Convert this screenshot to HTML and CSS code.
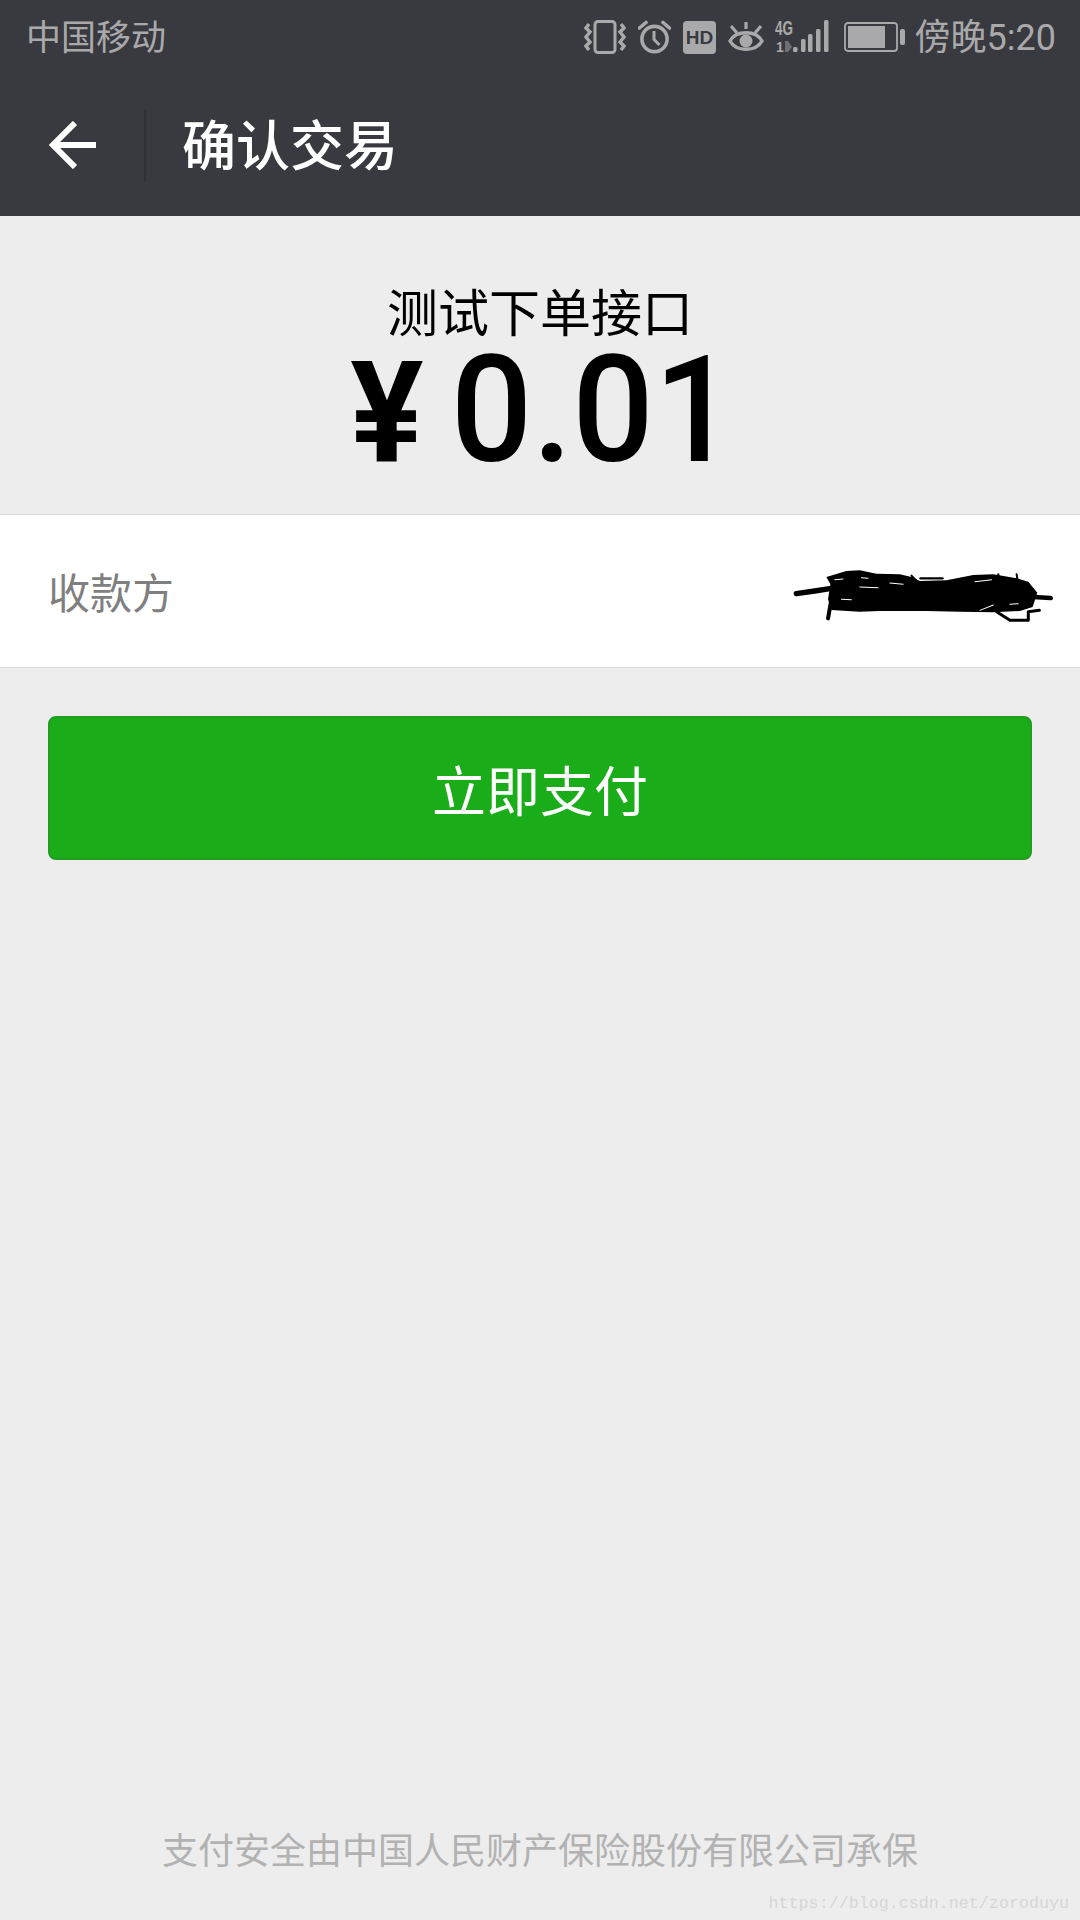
FILE: index.html
```html
<!DOCTYPE html>
<html lang="zh-CN">

<head>
  <meta charset="UTF-8">
  <meta name="viewport" content="width=device-width, initial-scale=1.0">
  <title>确认交易</title>
  <link rel="stylesheet" href="styles.css">
</head>

<body>
  <div class="page">
    <div class="status">
      <span class="carrier">中国移动</span>
      <div class="status-icons">
        <svg class="ico-vibrate" width="42" height="34" viewBox="0 0 42 34" fill="none" stroke="#a9a9ac">
          <rect x="11" y="1.5" width="20" height="31" rx="3" stroke-width="3"/>
          <path d="M5 4 L2 8 L6 12 L2 17 L6 22 L2 26 L5 30" stroke-width="3.4"/>
          <path d="M37 4 L40 8 L36 12 L40 17 L36 22 L40 26 L37 30" stroke-width="3.4"/>
        </svg>
        <svg class="ico-alarm" width="33" height="34" viewBox="0 0 33 34" fill="none" stroke="#a9a9ac">
          <circle cx="16.5" cy="19" r="12.6" stroke-width="3.6"/>
          <path d="M16 11 V19.5 L21.5 25" stroke-width="3"/>
          <path d="M1.5 8 L8 2.5 M31.5 8 L25 2.5" stroke-width="3.6" stroke-linecap="round"/>
        </svg>
        <svg class="ico-hd" width="33" height="33" viewBox="0 0 33 33">
          <rect width="33" height="33" rx="4" fill="#a9a9ac"/>
          <text x="16.5" y="23" text-anchor="middle" class="hd-label">HD</text>
        </svg>
        <svg class="ico-eye" width="36" height="32" viewBox="0 0 36 32" fill="none" stroke="#a9a9ac">
          <path d="M2 20 C8 9 28 9 34 20 C28 31 8 31 2 20 Z" stroke-width="3.4"/>
          <circle cx="18" cy="20" r="6.5" fill="#a9a9ac" stroke="none"/>
          <path d="M3 5 L9 12 M33 5 L27 12 M18 1 V8" stroke-width="3.2"/>
        </svg>
        <svg class="ico-signal" width="54" height="36" viewBox="0 0 54 36">
          <text x="0" y="16" class="net-label" textLength="18" lengthAdjust="spacingAndGlyphs">4G</text>
          <text x="1" y="33" class="net-small">1</text>
          <path d="M10 22 H13 L17 28 L13 33 H10 Z" fill="#6f7074"/>
          <rect x="18" y="28" width="4.5" height="5" rx="1.5" fill="#a9a9ac"/>
          <rect x="26" y="20" width="4.5" height="13" rx="1.5" fill="#a9a9ac"/>
          <rect x="33" y="15" width="4.5" height="18" rx="1.5" fill="#a9a9ac"/>
          <rect x="41" y="10" width="4.5" height="23" rx="1.5" fill="#a9a9ac"/>
          <rect x="49" y="1" width="4.5" height="32" rx="1.5" fill="#a9a9ac"/>
        </svg>
        <svg class="ico-battery" width="62" height="30" viewBox="0 0 62 30">
          <rect x="1" y="1" width="52" height="28" rx="3" fill="none" stroke="#a9a9ac" stroke-width="1.8"/>
          <rect x="4" y="4" width="37" height="22" fill="#a9a9ac"/>
          <rect x="56" y="7" width="5" height="16" rx="2" fill="#a9a9ac"/>
        </svg>
      </div>
      <span class="clock">傍晚5:20</span>
    </div>

    <header class="nav">
      <button class="back" aria-label="返回">
        <svg width="50" height="48" viewBox="0 0 50 48" fill="none" stroke="#fff" stroke-width="6">
          <path d="M48 24 H4"/>
          <path d="M27 2 L5 24 L27 46"/>
        </svg>
      </button>
      <span class="nav-line"></span>
      <h1 class="nav-title">确认交易</h1>
    </header>

    <section class="summary">
      <div class="goods">测试下单接口</div>
      <div class="amount"><span class="yen">¥</span>0.01</div>
    </section>

    <div class="payee">
      <span class="payee-label">收款方</span>
      <svg class="scribble" width="262" height="54" viewBox="100 85 785 160" fill="none" stroke="#000" stroke-linecap="round" stroke-linejoin="round">
        <path fill="#000" stroke="none" d="M200 108 L260 90 L300 88 L350 98 L420 100 L455 108 L480 120 L560 118 L640 102 L700 100 L770 112 L805 122 L832 155 L818 198 L780 210 L700 214 L600 212 L500 210 L360 210 L300 212 L215 207 L205 175 L212 130 Z"/>
        <path stroke-width="16" d="M110 158 L165 150 L215 142"/>
        <path stroke-width="14" d="M820 168 L872 171"/>
        <path stroke-width="12" d="M215 175 L205 232"/>
        <path stroke-width="9" d="M710 212 L750 238 L805 238 L805 212 L838 208"/>
        <path stroke-width="7" d="M482 112 H548"/>
        <path stroke-width="6" d="M455 104 L470 120 M770 100 L775 130 M715 100 L720 120"/>
        <path stroke="#fff" stroke-width="3" d="M225 116 L250 114 M305 110 L325 112 M300 138 L355 140 M390 126 L430 130 M645 122 L695 116 M245 175 L275 176 M660 208 L700 192 M750 190 L775 188"/>
      </svg>
    </div>

    <div class="pay-wrap">
      <button class="pay-btn">立即支付</button>
    </div>

    <footer class="guarantee">支付安全由中国人民财产保险股份有限公司承保</footer>
    <div class="watermark">https://blog.csdn.net/zoroduyu</div>
  </div>
</body>

</html>
```

FILE: styles.css
```css
* {
  box-sizing: border-box;
}

body {
  margin: 0;
  background: #ededed;
  font-family: "Noto Sans CJK SC", "Noto Sans", sans-serif;
}

.page {
  position: relative;
  display: flex;
  flex-direction: column;
  width: 1080px;
  height: 1920px;
  overflow: hidden;
}

/* status bar */
.status {
  display: flex;
  align-items: center;
  height: 74px;
  padding: 0 24px 0 26px;
  background: #393a3f;
  color: #a9a9ac;
  font-size: 35px;
}

.carrier {
  margin-right: auto;
  margin-bottom: 6px;
}

.status-icons {
  display: flex;
  align-items: center;
  gap: 12px;
  margin-right: 9px;
}

.ico-signal {
  margin-left: -1px;
  overflow: visible;
}

.ico-battery {
  margin-left: 3px;
}

.hd-label {
  font-family: "Liberation Sans", sans-serif;
  font-size: 19px;
  font-weight: bold;
  fill: #393a3f;
}

.net-label {
  font-family: "Liberation Sans", sans-serif;
  font-size: 20px;
  font-weight: bold;
  fill: #a9a9ac;
}

.net-small {
  font-family: "Liberation Sans", sans-serif;
  font-size: 14px;
  font-weight: bold;
  fill: #a9a9ac;
}

.clock {
  margin-bottom: 6px;
  font-family: "Roboto", "Noto Sans CJK SC", sans-serif;
  font-size: 36px;
}

/* title bar */
.nav {
  display: flex;
  align-items: center;
  height: 142px;
  padding-left: 48px;
  background: #393a3f;
}

.back {
  display: flex;
  padding: 0;
  border: none;
  background: none;
}

.nav-line {
  width: 2px;
  height: 72px;
  margin: 0 36px 0 46px;
  background: #2f3034;
}

.nav-title {
  margin: 0 0 6px;
  color: #fff;
  font-size: 54px;
  font-weight: 500;
}

/* amount */
.summary {
  height: 298px;
  padding-top: 64px;
  text-align: center;
  color: #000;
}

.goods {
  font-size: 51px;
  line-height: 60px;
}

/* digits in the shot are narrower than Roboto */
.amount {
  margin-top: 6px;
  padding-left: 6px;
  font-family: "Roboto", sans-serif;
  font-size: 148px;
  font-weight: 500;
  line-height: 130px;
  transform: scaleX(0.97);
}

.yen {
  margin-right: 28px;
  font-size: 141px;
  font-weight: 700;
}

/* payee row */
.payee {
  display: flex;
  align-items: center;
  justify-content: space-between;
  height: 154px;
  padding: 0 25px 0 48px;
  background: #fff;
  border-top: 1px solid #d9d9d9;
  border-bottom: 1px solid #d9d9d9;
}

.payee-label {
  margin-bottom: 2px;
  color: #7f7f7f;
  font-size: 42px;
}

.scribble {
  margin-top: 9px;
}

/* button */
.pay-wrap {
  padding: 48px 48px 0;
}

.pay-btn {
  display: block;
  width: 100%;
  height: 144px;
  border: 2px solid #229c21;
  border-radius: 8px;
  background: #1aad19;
  color: #fff;
  font-family: inherit;
  font-size: 54px;
}

/* footer */
.guarantee {
  margin-top: auto;
  padding-bottom: 46px;
  text-align: center;
  color: #b2b2b2;
  font-size: 36px;
}

.watermark {
  position: absolute;
  right: 11px;
  bottom: 7px;
  color: #d6d6d6;
  font-family: "Liberation Mono", monospace;
  font-size: 16.7px;
}
```
